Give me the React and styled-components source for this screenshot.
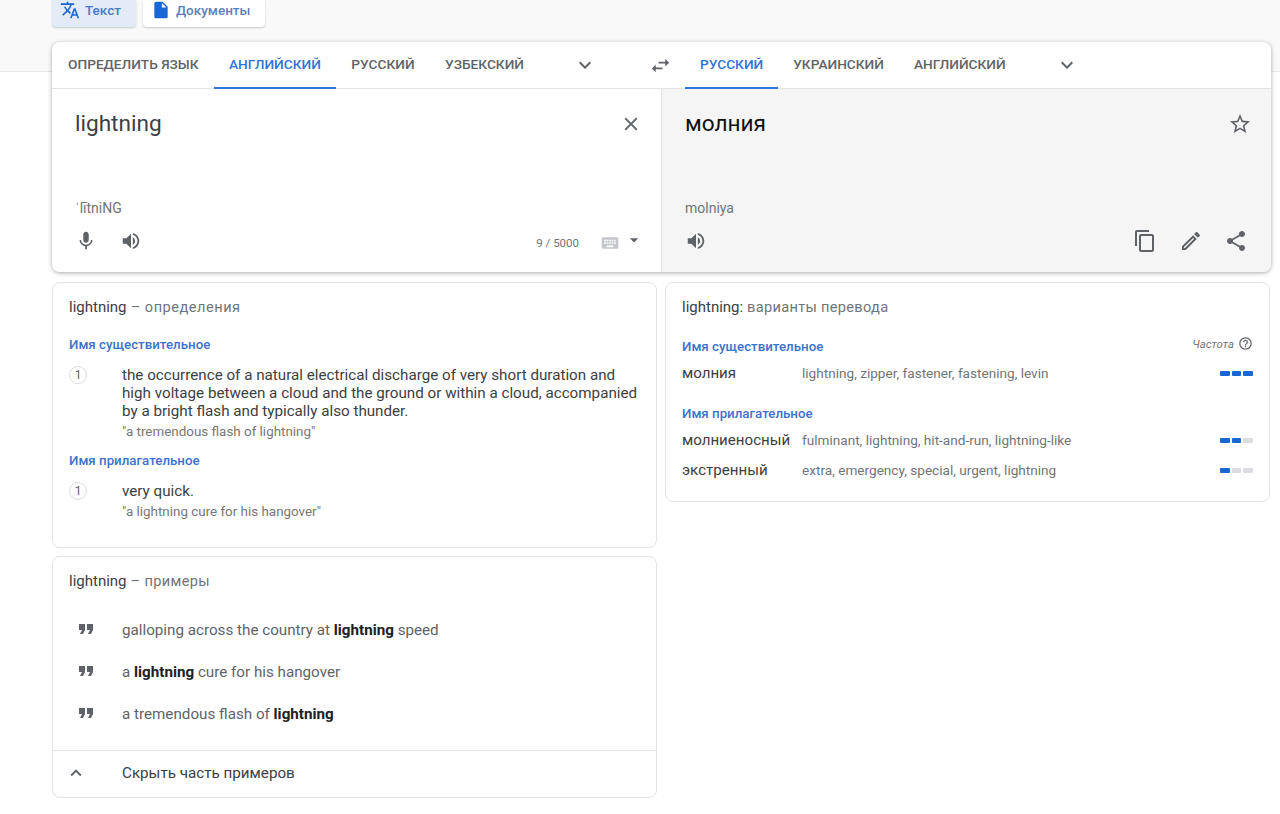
import React from 'react';
import styled, { createGlobalStyle } from 'styled-components';
import {
  MdTranslate,
  MdInsertDriveFile,
  MdKeyboardArrowDown,
  MdKeyboardArrowUp,
  MdSwapHoriz,
  MdClose,
  MdStarBorder,
  MdMic,
  MdVolumeUp,
  MdKeyboard,
  MdArrowDropDown,
  MdContentCopy,
  MdOutlineEdit,
  MdShare,
  MdFormatQuote,
  MdHelpOutline
} from 'react-icons/md';

const GlobalStyle = createGlobalStyle`
  html, body {
    margin: 0;
    padding: 0;
    background: #fff;
    overflow: hidden;
  }
  body {
    font-family: Roboto, "Liberation Sans", sans-serif;
    color: #3c4043;
  }
`;

const Band = styled.div`
  height: 71px;
  background: #f9f9f9;
  border-bottom: 1px solid #e6e6e6;
  padding-left: 52px;
  display: flex;
  align-items: flex-start;
  gap: 7px;
`;

const ModeButton = styled.div`
  height: 27px;
  box-sizing: border-box;
  display: flex;
  align-items: center;
  gap: 5px;
  padding: 0 15px 8px 8px;
  font-size: 13.5px;
  font-weight: 500;
  color: ${props => (props.active ? '#4a79c9' : '#5f7fb8')};
  background: ${props => (props.active ? '#e3ebf8' : '#fff')};
  border-radius: 0 0 4px 4px;
  box-shadow: 0 1px 2px rgba(60, 64, 67, 0.25);
  svg {
    color: #1a66d4;
    font-size: 20px;
  }
`;

const Main = styled.main`
  width: 1219px;
  margin: -30px 0 0 52px;
  position: relative;
`;

const Translator = styled.section`
  height: 230px;
  box-sizing: border-box;
  background: #fff;
  border-radius: 8px;
  box-shadow: 0 1px 4px rgba(60, 64, 67, 0.45);
  overflow: hidden;
  display: flex;
  flex-direction: column;
`;

const TabBar = styled.div`
  height: 47px;
  flex: none;
  box-sizing: border-box;
  border-bottom: 1px solid #e3e3e3;
  display: grid;
  grid-template-columns: 609px 1fr;
`;

const TabGroup = styled.div`
  display: flex;
  align-items: stretch;
  gap: ${props => props.$gap || 0}px;
  padding-left: ${props => props.$inset || 0}px;
`;

const Tab = styled.div`
  display: flex;
  align-items: center;
  padding: 0 15px 2px;
  margin-bottom: -1px;
  height: 47px;
  box-sizing: border-box;
  font-size: 13.7px;
  font-weight: 500;
  white-space: nowrap;
  color: ${props => (props.active ? '#2f72d8' : '#5f6368')};
  border-bottom: 2px solid ${props => (props.active ? '#2f72d8' : 'transparent')};
`;

const More = styled.div`
  display: flex;
  align-items: center;
  margin-left: ${props => props.$gap}px;
  font-size: 24px;
  color: #5f6368;
`;

const Swap = styled.div`
  display: flex;
  align-items: center;
  flex: none;
  margin-left: 52px;
  font-size: 23px;
  color: #5f6368;
`;

const Panes = styled.div`
  flex: 1;
  display: grid;
  grid-template-columns: 609px 1fr;
`;

const Pane = styled.div`
  display: flex;
  flex-direction: column;
  padding: ${props => (props.target ? '20px 23px 0 23px' : '20px 19px 0 23px')};
  background: ${props => (props.target ? '#f5f5f5' : '#fff')};
  border-left: ${props => (props.target ? '1px solid #e3e3e3' : 'none')};
`;

const MainRow = styled.div`
  display: flex;
  justify-content: space-between;
  align-items: center;
  height: 30px;
`;

const BigText = styled.div`
  font-size: 22.6px;
  line-height: 30px;
  color: ${props => (props.target ? '#111' : '#3c4043')};
`;

const StarIcon = styled(MdStarBorder)`
  font-size: 24px;
  color: #5f6368;
  margin-right: -4px;
`;

const Translit = styled.div`
  margin-top: 60px;
  height: 18px;
  line-height: 18px;
  font-size: 14px;
  color: #70757a;
`;

const ToolRow = styled.div`
  margin-top: 12px;
  height: 24px;
  display: flex;
  align-items: center;
  justify-content: space-between;
  color: #5f6368;
  font-size: 22px;
`;

const ToolGroup = styled.div`
  display: flex;
  align-items: center;
  gap: ${props => props.$gap}px;
  font-size: ${props => props.$size}px;
`;

const InputMeta = styled.div`
  display: flex;
  align-items: center;
`;

const Counter = styled.span`
  font-size: 11.5px;
  color: #70757a;
  margin-top: 4px;
`;

const KeyboardIcon = styled(MdKeyboard)`
  font-size: 20px;
  color: #c5c7ca;
  margin: 4px 0 0 21px;
`;

const CaretIcon = styled(MdArrowDropDown)`
  font-size: 20px;
  color: #5f6368;
  margin: -2px -2px 0 4px;
`;

const Cards = styled.div`
  display: grid;
  grid-template-columns: 605px 605px;
  gap: 8px;
  margin-top: 10px;
  align-items: start;
`;

const Column = styled.div`
  display: flex;
  flex-direction: column;
  gap: 8px;
`;

const Card = styled.section`
  box-sizing: border-box;
  background: #fff;
  border: 1px solid #e3e3e3;
  border-radius: 8px;
  padding-top: 14px;
  height: ${props => props.$height}px;
`;

const CardTitle = styled.h3`
  margin: 0;
  padding: 0 16px;
  height: 20px;
  line-height: 20px;
  font-size: 14.6px;
  font-weight: 400;
  color: #70757a;
  letter-spacing: ${props => props.$track || 0}px;
  span {
    font-size: 15px;
    color: #3c4043;
    letter-spacing: 0;
  }
`;

const PartOfSpeech = styled.div`
  padding: 0 16px;
  margin-top: ${props => props.$top}px;
  height: 18px;
  line-height: 18px;
  font-size: 13.3px;
  font-weight: 500;
  color: #3d72cf;
`;

const Definition = styled.div`
  display: flex;
  padding: 0 16px;
  margin-top: ${props => props.$top}px;
`;

const Bullet = styled.div`
  flex: none;
  width: 18px;
  height: 18px;
  box-sizing: border-box;
  border: 1px solid #dadce0;
  border-radius: 50%;
  font-size: 12px;
  line-height: 16px;
  text-align: center;
  color: #5f6368;
  margin-right: 35px;
`;

const DefBody = styled.div`
  width: 525px;
`;

const DefText = styled.div`
  font-size: 15.2px;
  line-height: 18px;
  color: #3c4043;
`;

const DefExample = styled.div`
  margin-top: 3px;
  font-size: 13.4px;
  line-height: 17px;
  color: #777;
`;

const ExampleList = styled.div`
  display: flex;
  flex-direction: column;
  gap: 24px;
  margin-top: 30px;
  height: 129px;
`;

const ExampleRow = styled.div`
  display: flex;
  align-items: center;
  height: 18px;
  padding-left: 21px;
  font-size: 15.2px;
  color: #5f6368;
  b {
    color: #202124;
    font-weight: 700;
  }
`;

const QuoteIcon = styled(MdFormatQuote)`
  flex: none;
  font-size: 24px;
  color: #5f6368;
  margin: -3px 24px 0 0;
`;

const Collapse = styled.div`
  display: flex;
  align-items: center;
  height: 46px;
  box-sizing: border-box;
  padding: 0 0 2px 12px;
  border-top: 1px solid #e3e3e3;
  font-size: 15.2px;
  color: #3c4043;
  svg {
    font-size: 22px;
    color: #5f6368;
    margin-right: 35px;
  }
`;

const SectionHead = styled.div`
  display: flex;
  justify-content: space-between;
  align-items: flex-start;
  padding-right: 16px;
`;

const Frequency = styled.div`
  display: flex;
  align-items: center;
  gap: 4px;
  margin-top: 19px;
  font-size: 11.4px;
  font-style: italic;
  color: #70757a;
  svg {
    font-size: 15px;
    color: #5f6368;
  }
`;

const TranslationRow = styled.div`
  display: grid;
  grid-template-columns: 120px 1fr 33px;
  align-items: center;
  height: 18px;
  padding: 0 16px;
  margin-top: ${props => props.$top}px;
`;

const Word = styled.div`
  font-size: 15.1px;
  white-space: nowrap;
  color: #3c4043;
`;

const Synonyms = styled.div`
  font-size: 13.6px;
  color: #70757a;
`;

const Meter = styled.div`
  display: flex;
  gap: 2px;
`;

const Segment = styled.div`
  width: 10px;
  height: 5px;
  border-radius: 1px;
  background: ${props => (props.on ? '#1a66d4' : '#dadce0')};
`;

const definitions = [
  {
    part: 'Имя существительное',
    top: 19,
    itemTop: 12,
    text: 'the occurrence of a natural electrical discharge of very short duration and high voltage between a cloud and the ground or within a cloud, accompanied by a bright flash and typically also thunder.',
    example: '"a tremendous flash of lightning"'
  },
  {
    part: 'Имя прилагательное',
    top: 12,
    itemTop: 12,
    text: 'very quick.',
    example: '"a lightning cure for his hangover"'
  }
];

const translations = [
  { part: 'Имя существительное' },
  { word: 'молния', list: 'lightning, zipper, fastener, fastening, levin', level: 3, top: 8 },
  { part: 'Имя прилагательное' },
  { word: 'молниеносный', list: 'fulminant, lightning, hit-and-run, lightning-like', level: 2, top: 8 },
  { word: 'экстренный', list: 'extra, emergency, special, urgent, lightning', level: 1, top: 12 }
];

function App() {
  return (
    <>
      <GlobalStyle />
      <Band>
        <ModeButton active>
          <MdTranslate />
          Текст
        </ModeButton>
        <ModeButton>
          <MdInsertDriveFile />
          Документы
        </ModeButton>
      </Band>
      <Main>
        <Translator>
          <TabBar>
            <TabGroup $inset={1} $gap={0.5}>
              <Tab>ОПРЕДЕЛИТЬ ЯЗЫК</Tab>
              <Tab active>АНГЛИЙСКИЙ</Tab>
              <Tab>РУССКИЙ</Tab>
              <Tab>УЗБЕКСКИЙ</Tab>
              <More $gap={33}>
                <MdKeyboardArrowDown />
              </More>
              <Swap>
                <MdSwapHoriz />
              </Swap>
            </TabGroup>
            <TabGroup $inset={24}>
              <Tab active>РУССКИЙ</Tab>
              <Tab>УКРАИНСКИЙ</Tab>
              <Tab>АНГЛИЙСКИЙ</Tab>
              <More $gap={34}>
                <MdKeyboardArrowDown />
              </More>
            </TabGroup>
          </TabBar>
          <Panes>
            <Pane>
              <MainRow>
                <BigText>lightning</BigText>
                <MdClose size={22} color="#5f6368" />
              </MainRow>
              <Translit>ˈlītniNG</Translit>
              <ToolRow>
                <ToolGroup $gap={23} $size={22}>
                  <MdMic />
                  <MdVolumeUp />
                </ToolGroup>
                <InputMeta>
                  <Counter>9 / 5000</Counter>
                  <KeyboardIcon />
                  <CaretIcon />
                </InputMeta>
              </ToolRow>
            </Pane>
            <Pane target>
              <MainRow>
                <BigText target>молния</BigText>
                <StarIcon />
              </MainRow>
              <Translit>molniya</Translit>
              <ToolRow>
                <MdVolumeUp />
                <ToolGroup $gap={21.5} $size={24}>
                  <MdContentCopy />
                  <MdOutlineEdit />
                  <MdShare />
                </ToolGroup>
              </ToolRow>
            </Pane>
          </Panes>
        </Translator>
        <Cards>
          <Column>
            <Card $height={266}>
              <CardTitle $track={0.5}>
                <span>lightning</span> – определения
              </CardTitle>
              {definitions.map(item => (
                <React.Fragment key={item.part}>
                  <PartOfSpeech $top={item.top}>{item.part}</PartOfSpeech>
                  <Definition $top={item.itemTop}>
                    <Bullet>1</Bullet>
                    <DefBody>
                      <DefText>{item.text}</DefText>
                      <DefExample>{item.example}</DefExample>
                    </DefBody>
                  </Definition>
                </React.Fragment>
              ))}
            </Card>
            <Card $height={242}>
              <CardTitle $track={0.35}>
                <span>lightning</span> – примеры
              </CardTitle>
              <ExampleList>
                <ExampleRow>
                  <QuoteIcon />
                  <span>
                    galloping across the country at <b>lightning</b> speed
                  </span>
                </ExampleRow>
                <ExampleRow>
                  <QuoteIcon />
                  <span>
                    a <b>lightning</b> cure for his hangover
                  </span>
                </ExampleRow>
                <ExampleRow>
                  <QuoteIcon />
                  <span>
                    a tremendous flash of <b>lightning</b>
                  </span>
                </ExampleRow>
              </ExampleList>
              <Collapse>
                <MdKeyboardArrowUp />
                Скрыть часть примеров
              </Collapse>
            </Card>
          </Column>
          <Card $height={220}>
            <CardTitle $track={0.3}>
              <span>lightning:</span> варианты перевода
            </CardTitle>
            {translations.map((row, index) =>
              row.part ? (
                index === 0 ? (
                  <SectionHead key={row.part}>
                    <PartOfSpeech $top={21}>{row.part}</PartOfSpeech>
                    <Frequency>
                      Частота
                      <MdHelpOutline />
                    </Frequency>
                  </SectionHead>
                ) : (
                  <PartOfSpeech key={row.part} $top={23}>
                    {row.part}
                  </PartOfSpeech>
                )
              ) : (
                <TranslationRow key={row.word} $top={row.top}>
                  <Word>{row.word}</Word>
                  <Synonyms>{row.list}</Synonyms>
                  <Meter>
                    {[1, 2, 3].map(n => (
                      <Segment key={n} on={n <= row.level} />
                    ))}
                  </Meter>
                </TranslationRow>
              )
            )}
          </Card>
        </Cards>
      </Main>
    </>
  );
}

export default App;
